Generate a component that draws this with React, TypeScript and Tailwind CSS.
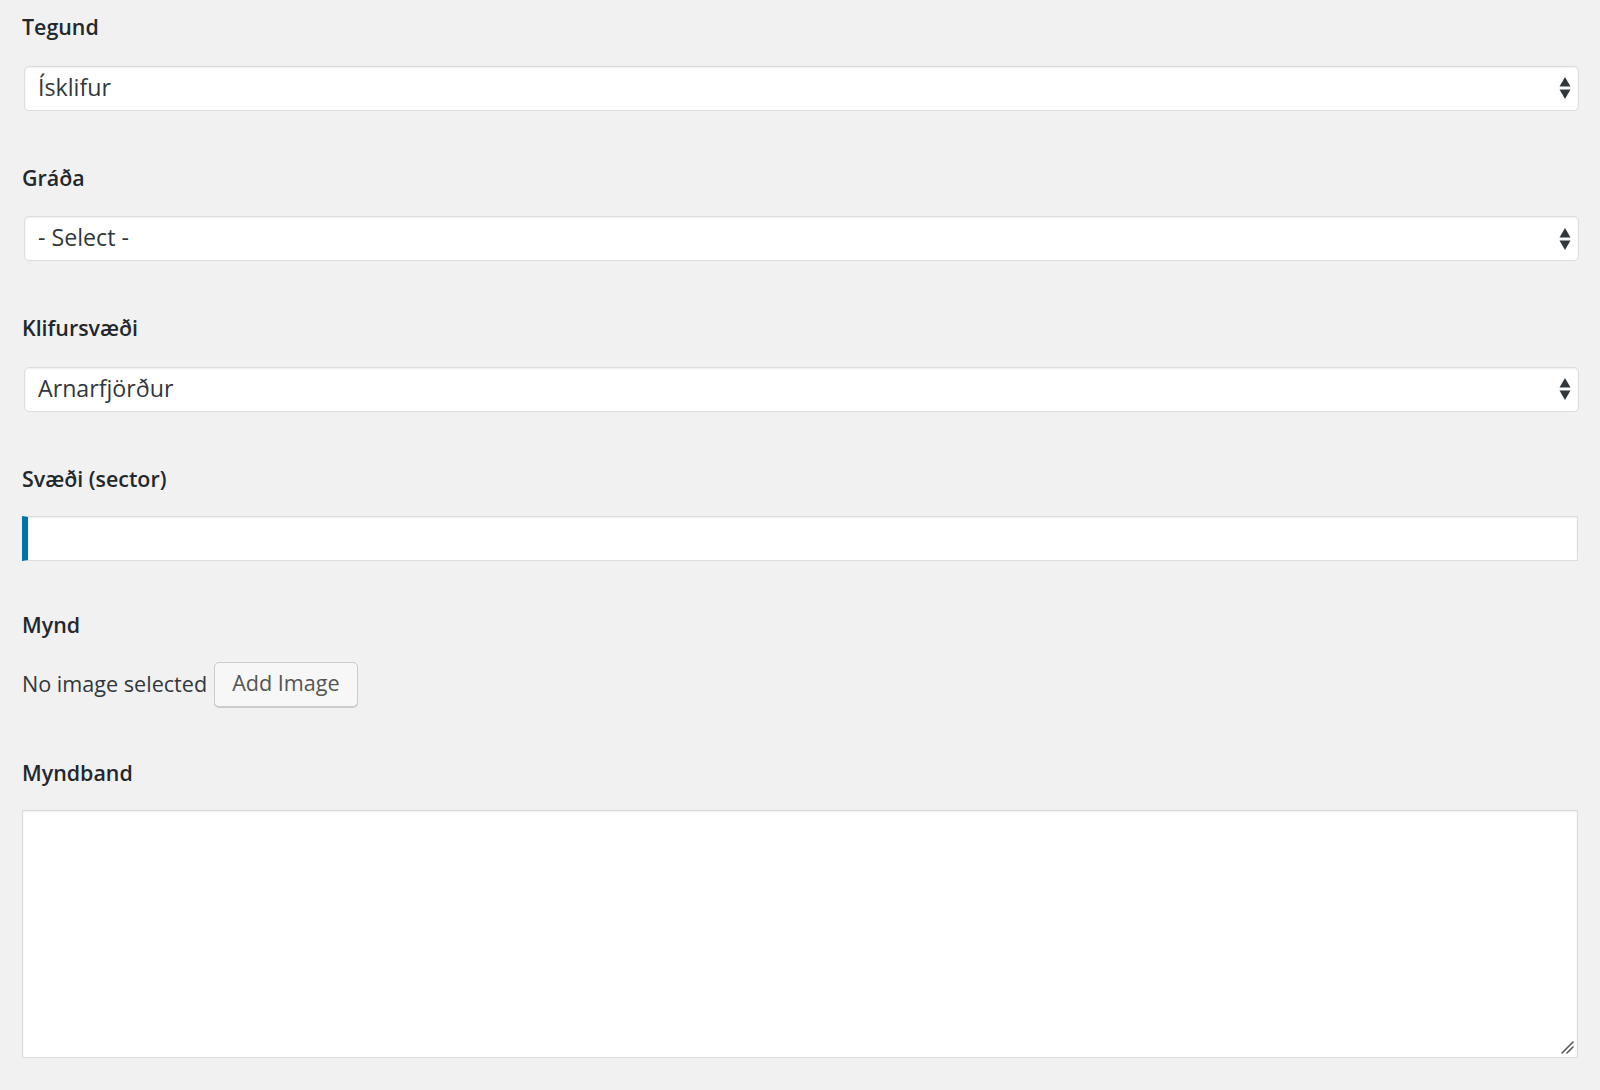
import React from 'react';

const font = { fontFamily: '"Open Sans", "Noto Sans", sans-serif' };

function Label({ children, className = '' }: { children: React.ReactNode; className?: string }) {
  return (
    <div className={`text-[21.4px] leading-[30.5px] font-semibold text-[#23282d] ${className}`}>{children}</div>
  );
}

function Arrows() {
  return (
    <svg width="12" height="22" viewBox="0 0 12 22" className="absolute right-[8px] top-1/2 -translate-y-1/2 pointer-events-none">
      <path d="M6 0 L11.5 9.5 L0.5 9.5 Z" fill="#32373c" />
      <path d="M0.5 12.5 L11.5 12.5 L6 22 Z" fill="#32373c" />
    </svg>
  );
}

function SelectField({ label, value, options }: { label: string; value: string; options: string[] }) {
  return (
    <div className="mb-[52px]">
      <Label className="mb-[23px]">{label}</Label>
      <div className="relative ml-[2px] -mr-[1px]">
        <select
          defaultValue={value}
          className="appearance-none w-full h-[45px] bg-white border border-[#ddd] rounded-[5px] pl-[13px] pr-10 pb-[2px] text-[23.2px] text-[#32373c] shadow-[inset_0_1px_2px_rgba(0,0,0,0.07)] outline-none"
        >
          {options.map((o) => (
            <option key={o}>{o}</option>
          ))}
        </select>
        <Arrows />
      </div>
    </div>
  );
}

export default function App() {
  return (
    <main className="min-h-screen bg-[#f1f1f1] px-[22px] pt-[12px] pb-8" style={font}>
      <SelectField label="Tegund" value="Ísklifur" options={['Ísklifur', 'Sportklifur', 'Dótaklifur']} />
      <SelectField label="Gráða" value="- Select -" options={['- Select -', 'WI3', 'WI4', 'WI5']} />
      <SelectField label="Klifursvæði" value="Arnarfjörður" options={['Arnarfjörður', 'Hnappavellir', 'Stardalur']} />

      <div className="mb-[49px]">
        <Label className="mb-[21.5px]">Svæði (sector)</Label>
        <input
          type="text"
          className="block w-full h-[45px] bg-white border border-[#ddd] border-l-[6px] border-l-[#0073aa] text-[21.6px] text-[#32373c] px-3 shadow-[inset_0_1px_2px_rgba(0,0,0,0.07)] outline-none"
        />
      </div>

      <div className="mb-[51px]">
        <Label className="mb-[21.5px]">Mynd</Label>
        <div className="flex items-center">
          <span className="text-[21.6px] leading-[30.5px] text-[#32373c] mr-[7px]">No image selected</span>
          <button
            type="button"
            className="h-[45px] px-[17px] pb-[2px] bg-[#f7f7f7] border border-[#ccc] rounded-[5px] shadow-[0_1px_0_#ccc] text-[21.6px] text-[#555]"
          >
            Add Image
          </button>
        </div>
      </div>

      <div className="relative">
        <Label className="mb-[21.5px]">Myndband</Label>
        <textarea className="block w-full h-[248px] resize-none bg-white border border-[#ddd] text-[21.6px] text-[#32373c] p-2 shadow-[inset_0_1px_2px_rgba(0,0,0,0.07)] outline-none" />
        <svg width="14" height="14" viewBox="0 0 14 14" className="absolute right-[4px] bottom-[4px] pointer-events-none">
          <path d="M13 2 L2 13" stroke="#555" strokeWidth="1.6" strokeLinecap="round" />
          <path d="M13 7 L7 13" stroke="#555" strokeWidth="1.6" strokeLinecap="round" />
        </svg>
      </div>
    </main>
  );
}
